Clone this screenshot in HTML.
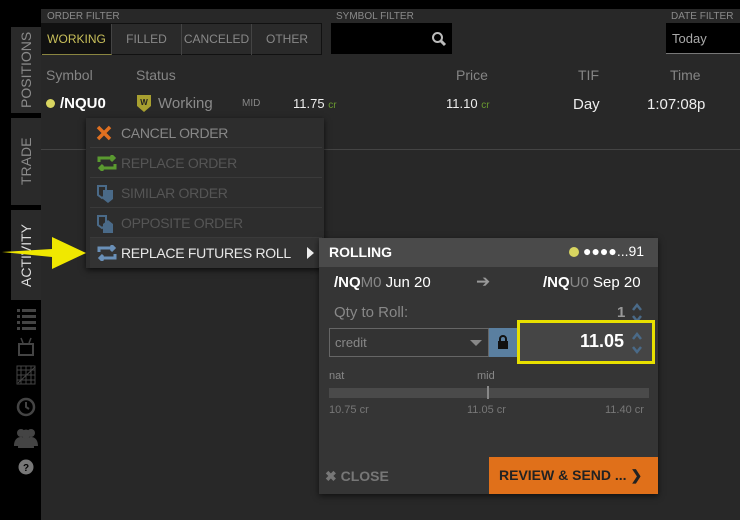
<!DOCTYPE html>
<html><head><style>
*{margin:0;padding:0;box-sizing:border-box}
body{width:740px;height:520px;background:#000;font-family:"Liberation Sans",sans-serif;position:relative;overflow:hidden;color:#ddd}
.a{position:absolute}
.lbl{font-size:10px;color:#8a8a8a}
.vt{position:absolute;writing-mode:vertical-rl;transform:rotate(180deg);font-size:14px;color:#8a8a8a;display:flex;align-items:center;justify-content:center}
.tab{position:absolute;top:0;height:31px;line-height:31px;text-align:center;font-size:12px;color:#888;border-right:1px solid #444}
.hd{font-size:14px;color:#858585;position:absolute;top:67px}
.mi{position:absolute;left:4px;width:232px;height:30px;line-height:30px;font-size:14px;letter-spacing:-0.3px;color:#555;padding-left:31px;border-bottom:1px solid #3a3a3a}
.mi svg{position:absolute;left:6px;top:7px}
</style></head><body>
<div class="a" style="left:41px;top:9px;width:699px;height:511px;background:#282828"></div>
<div class="vt" style="left:11px;top:27px;width:30px;height:86px;background:#2a2a2a">POSITIONS</div>
<div class="vt" style="left:11px;top:118px;width:30px;height:87px;background:#2a2a2a">TRADE</div>
<div class="vt" style="left:11px;top:210px;width:30px;height:90px;background:#2a2a2a;color:#ddd">ACTIVITY</div>
<svg class="a" style="left:14px;top:306px" width="24" height="170" viewBox="0 0 24 170" fill="#444">
<rect x="3" y="3" width="3" height="3"/><rect x="8" y="3" width="14" height="3"/>
<rect x="3" y="9" width="3" height="3"/><rect x="8" y="9" width="14" height="3"/>
<rect x="3" y="15" width="3" height="3"/><rect x="8" y="15" width="14" height="3"/>
<rect x="3" y="21" width="3" height="3"/><rect x="8" y="21" width="14" height="3"/>
<rect x="5" y="38" width="14" height="11" fill="none" stroke="#444" stroke-width="2"/><path d="M9 37l-2-5M15 37l2-5" stroke="#444" stroke-width="1.5"/>
<g stroke="#444" stroke-width="1" fill="none"><rect x="3" y="60" width="18" height="18"/><path d="M3 64h18M3 69h18M3 74h18M7 60v18M12 60v18M17 60v18M4 77l17-16" /></g>
<circle cx="12" cy="101" r="8" fill="none" stroke="#444" stroke-width="2.5"/><path d="M12 96v5l3 2" stroke="#444" stroke-width="2" fill="none"/>
<circle cx="7" cy="127" r="4"/><circle cx="17" cy="127" r="4"/><circle cx="12" cy="128" r="4.5"/><path d="M0 140c0-7 4-9 7-9s7 2 7 9zM10 140c0-7 4-9 7-9s7 2 7 9z"/><path d="M4 142c0-8 4-10 8-10s8 2 8 10z"/>
<circle cx="12" cy="161" r="7.5" fill="#777"/><text x="12" y="165" font-size="10" font-weight="bold" fill="#000" text-anchor="middle" font-family="Liberation Sans">?</text>
</svg>
<div class="a lbl" style="left:47px;top:11px">ORDER FILTER</div>
<div class="a" style="left:41px;top:23px;width:281px;height:32px;border:1px solid #111;background:#2a2a2a">
<div class="tab" style="left:0;width:70px;background:#111;color:#c8bf5a;border-bottom:1px solid #8a8540">WORKING</div>
<div class="tab" style="left:70px;width:70px">FILLED</div>
<div class="tab" style="left:140px;width:70px">CANCELED</div>
<div class="tab" style="left:210px;width:70px;border:none">OTHER</div>
</div>
<div class="a lbl" style="left:336px;top:11px">SYMBOL FILTER</div>
<div class="a" style="left:331px;top:23px;width:121px;height:31px;background:#000"></div>
<svg class="a" style="left:431px;top:31px" width="16" height="16"><circle cx="6.5" cy="6.5" r="4.5" fill="none" stroke="#bbb" stroke-width="2"/><path d="M10 10l4 4" stroke="#bbb" stroke-width="3"/></svg>
<div class="a lbl" style="left:671px;top:11px">DATE FILTER</div>
<div class="a" style="left:666px;top:23px;width:74px;height:31px;background:#000;border-bottom:1px solid #777;font-size:13px;color:#aaa;line-height:31px;padding-left:6px">Today</div>
<div class="hd" style="left:46px">Symbol</div>
<div class="hd" style="left:136px">Status</div>
<div class="hd" style="left:456px">Price</div>
<div class="hd" style="left:578px">TIF</div>
<div class="hd" style="left:670px">Time</div>
<div class="a" style="left:46px;top:99px;width:9px;height:9px;border-radius:50%;background:#d8d560"></div>
<div class="a" style="left:60px;top:95px;font-size:15px;font-weight:bold;color:#fff">/NQU0</div>
<svg class="a" style="left:137px;top:95px" width="14" height="17"><path d="M0 0h14v11l-7 6-7-6z" fill="#a8a030"/><text x="7" y="10" font-size="8" font-weight="bold" text-anchor="middle" fill="#222" font-family="Liberation Sans">W</text></svg>
<div class="a" style="left:158px;top:95px;font-size:15px;color:#8a8a8a">Working</div>
<div class="a" style="left:242px;top:98px;font-size:10px;color:#888">MID</div>
<div class="a" style="left:293px;top:96px;font-size:13px;color:#eee">11.75 <span style="font-size:10px;color:#6a9a30">cr</span></div>
<div class="a" style="left:446px;top:96px;font-size:13px;color:#eee">11.10 <span style="font-size:10px;color:#6a9a30">cr</span></div>
<div class="a" style="left:573px;top:96px;font-size:15px;color:#eee">Day</div>
<div class="a" style="left:647px;top:96px;font-size:15px;color:#eee">1:07:08p</div>
<div class="a" style="left:41px;top:149px;width:699px;height:1px;background:#444"></div>
<div class="a" style="left:86px;top:118px;width:238px;height:150px;background:#2d2d2d;box-shadow:0 2px 6px rgba(0,0,0,.7)">
<div class="mi" style="top:0;color:#888"><svg width="16" height="16"><path d="M2 2l12 12M14 2L2 14" stroke="#e07020" stroke-width="3.5"/></svg>CANCEL ORDER</div>
<div class="mi" style="top:30px"><svg width="22" height="16"><path d="M3 7V3h14M15 0l3 3-3 3M19 9v4H5M7 10l-3 3 3 3" stroke="#5a9a30" stroke-width="3" fill="none"/></svg>REPLACE ORDER</div>
<div class="mi" style="top:60px"><svg width="20" height="18"><path d="M2 1h8v9l-4 3-4-3z" fill="none" stroke="#4a6a88" stroke-width="2"/><path d="M7 5h10v9l-5 4-5-4z" fill="#4a6a88"/></svg>SIMILAR ORDER</div>
<div class="mi" style="top:90px"><svg width="20" height="18"><path d="M2 1h8v9l-4 3-4-3z" fill="none" stroke="#4a6a88" stroke-width="2"/><path d="M7 18h10V9l-5-4-5 4z" fill="#4a6a88"/></svg>OPPOSITE ORDER</div>
<div class="mi" style="top:120px;color:#e8e8e8;border:none;background:#333"><svg width="22" height="16"><path d="M3 7V3h14M15 0l3 3-3 3M19 9v4H5M7 10l-3 3 3 3" stroke="#6a90b8" stroke-width="3" fill="none"/></svg>REPLACE FUTURES ROLL</div>
<div class="a" style="left:221px;top:129px;width:0;height:0;border-left:7px solid #eee;border-top:6px solid transparent;border-bottom:6px solid transparent"></div>
</div>
<svg class="a" style="left:0;top:236px" width="90" height="36"><path d="M2 16l50-3v-12l34 16-34 16v-12z" fill="#f0e800"/></svg>
<div class="a" style="left:319px;top:238px;width:339px;height:256px;background:#353535;box-shadow:0 2px 6px rgba(0,0,0,.6)">
<div class="a" style="left:0;top:0;width:339px;height:29px;background:#4a4a4a"></div>
<div class="a" style="left:10px;top:6px;font-size:14px;font-weight:bold;color:#fff">ROLLING</div>
<div class="a" style="left:250px;top:9px;width:10px;height:10px;border-radius:50%;background:#d8d560"></div>
<div class="a" style="left:264px;top:5px;font-size:14px;color:#fff">●●●●...91</div>
<div class="a" style="left:15px;top:36px;font-size:15px;color:#fff"><b>/NQ</b><span style="color:#888">M0</span> Jun 20</div>
<div class="a" style="left:157px;top:34px;font-size:17px;color:#999">➔</div>
<div class="a" style="left:224px;top:36px;font-size:15px;color:#fff"><b>/NQ</b><span style="color:#888">U0</span> Sep 20</div>
<div class="a" style="left:15px;top:66px;font-size:15px;color:#888">Qty to Roll:</div>
<div class="a" style="left:298px;top:66px;font-size:15px;font-weight:bold;color:#999">1</div>
<svg class="a" style="left:312px;top:64px" width="12" height="22"><path d="M2 8l4-5 4 5M2 14l4 5 4-5" stroke="#4a6a88" stroke-width="2.5" fill="none"/></svg>
<div class="a" style="left:10px;top:90px;width:160px;height:29px;border:1px solid #666;background:#333;font-size:13px;color:#888;line-height:27px;padding-left:5px">credit</div>
<div class="a" style="left:151px;top:102px;border-top:6px solid #888;border-left:6px solid transparent;border-right:6px solid transparent"></div>
<div class="a" style="left:170px;top:90px;width:28px;height:29px;background:#5a7fa0"></div>
<svg class="a" style="left:178px;top:96px" width="12" height="16"><path d="M3 7V5a3 3 0 016 0v2" stroke="#111" stroke-width="2" fill="none"/><rect x="1" y="7" width="10" height="8" fill="#111"/></svg>
<div class="a" style="left:198px;top:82px;width:138px;height:44px;border:3px solid #e8e000"></div>
<div class="a" style="left:201px;top:85px;width:132px;height:38px;background:#454545"></div>
<div class="a" style="left:261px;top:93px;font-size:18px;font-weight:bold;color:#fff">11.05</div>
<svg class="a" style="left:312px;top:93px" width="12" height="24"><path d="M2 8l4-5 4 5M2 16l4 5 4-5" stroke="#4a6a88" stroke-width="2.5" fill="none"/></svg>
<div class="a" style="left:10px;top:132px;font-size:11px;color:#888">nat</div>
<div class="a" style="left:158px;top:132px;font-size:11px;color:#888">mid</div>
<div class="a" style="left:10px;top:150px;width:320px;height:10px;background:#4a4a4a"></div>
<div class="a" style="left:168px;top:148px;width:2px;height:13px;background:#888"></div>
<div class="a" style="left:10px;top:166px;font-size:11px;color:#777">10.75 cr</div>
<div class="a" style="left:148px;top:166px;font-size:11px;color:#777">11.05 cr</div>
<div class="a" style="left:286px;top:166px;font-size:11px;color:#777">11.40 cr</div>
<div class="a" style="left:6px;top:230px;font-size:14px;font-weight:bold;color:#777">✖ CLOSE</div>
<div class="a" style="left:170px;top:219px;width:169px;height:37px;background:#e0701a;color:#222;font-size:14px;font-weight:bold;line-height:37px;padding-left:10px">REVIEW &amp; SEND ... ❯</div>
</div>
</body></html>
